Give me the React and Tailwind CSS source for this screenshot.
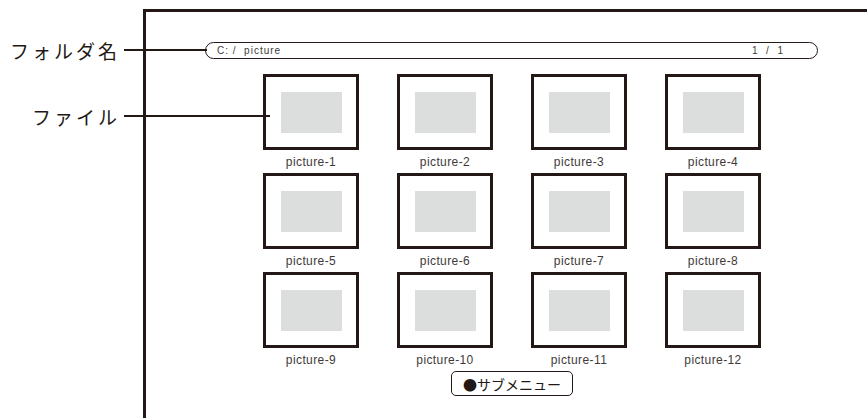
import React from "react";

function Thumb({ n }) {
  return (
    <div className="flex flex-col items-center">
      <div className="w-[96px] h-[76px] border-[3px] border-[#231815] flex items-center justify-center bg-white">
        <div className="w-[61px] h-[41px] bg-[#dcdddd]" />
      </div>
      <div className="h-[23px] flex items-center justify-center text-[12px] tracking-[0.4px] text-[#3e3a39] leading-none">
        picture-{n}
      </div>
    </div>
  );
}

export default function App() {
  const items = Array.from({ length: 12 }, (_, i) => i + 1);
  return (
    <div
      className="w-[867px] h-[418px] bg-white flex overflow-hidden text-[#231815]"
      style={{ fontFamily: '"Liberation Sans", Arial, "Noto Sans CJK JP", sans-serif' }}
    >
      {/* annotation column */}
      <div className="w-[143px] shrink-0 pt-[40px] flex flex-col gap-[46px]">
        <div className="relative h-[20px] flex items-center justify-end pr-[23px]">
          <span
            className="text-[19px] tracking-[3px] leading-none"
            style={{ fontFamily: '"Noto Sans CJK JP", sans-serif' }}
          >
            フォルダ名
          </span>
          <div className="absolute z-10 left-[124px] top-[9px] w-[83px] h-[2px] bg-[#231815]" />
        </div>
        <div className="relative h-[20px] flex items-center justify-end pr-[23px]">
          <span
            className="text-[19px] tracking-[3px] leading-none"
            style={{ fontFamily: '"Noto Sans CJK JP", sans-serif' }}
          >
            ファイル
          </span>
          <div className="absolute z-10 left-[124px] top-[9px] w-[146px] h-[2px] bg-[#231815]" />
        </div>
      </div>

      {/* screen frame */}
      <div className="mt-[9px] flex-1 border-l-[3px] border-t-[3px] border-[#231815] pt-[30px] pl-[59px] min-w-[740px]">
        <div className="w-[613px] h-[17px] border-[1.5px] border-[#231815] rounded-full flex items-center justify-between pl-[11px] pr-[33px] text-[10px] tracking-[1px] leading-none whitespace-pre text-[#3e3a39]">
          <span>C: /  picture</span>
          <span>1  /  1</span>
        </div>

        <div className="mt-[15px] ml-[58px] w-[498px] flex flex-col items-center">
          <div className="grid grid-cols-[repeat(4,96px)] gap-x-[38px]">
            {items.map((n) => (
              <Thumb key={n} n={n} />
            ))}
          </div>
          <div
            className="w-[122px] h-[25px] border-[1.5px] border-[#231815] rounded-[5px] flex items-center justify-center text-[14px] leading-none"
            style={{ fontFamily: '"Noto Sans CJK JP", sans-serif' }}
          >
            ●サブメニュー
          </div>
        </div>
      </div>
    </div>
  );
}
